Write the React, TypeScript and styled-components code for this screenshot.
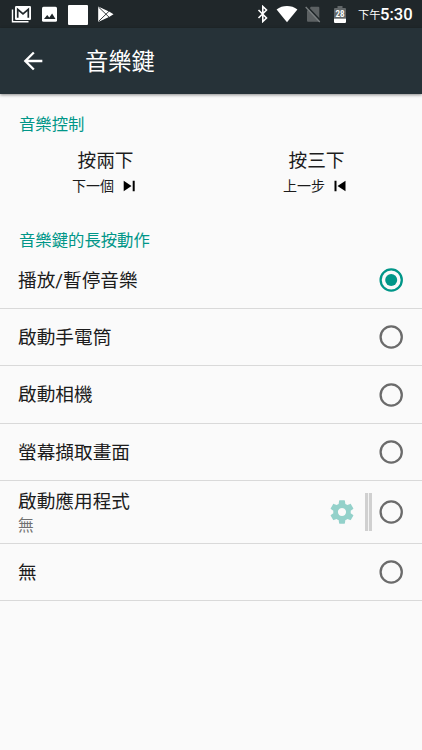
import React from "react";
import styled, { createGlobalStyle } from "styled-components";

const GlobalStyle = createGlobalStyle`
  * { box-sizing: border-box; }
  body {
    margin: 0;
    background: #fafafa;
    color: #1c1c1c;
    font-family: Roboto, "Noto Sans CJK TC", sans-serif;
  }
`;

const Screen = styled.div`
  width: 422px;
  height: 750px;
  overflow: hidden;
  background: #fafafa;
`;

const StatusBar = styled.header`
  display: flex;
  justify-content: space-between;
  height: 28px;
  padding: 0 10px 0 11px;
  background: #20272a;
  color: #fff;
`;

const StatusGroup = styled.div`
  display: flex;
  align-items: center;
`;

const Glyph = styled.svg<{ $gap?: number }>`
  display: block;
  flex: none;
  margin-right: ${(p) => p.$gap ?? 0}px;
`;

const BlankNotification = styled.span<{ $gap: number }>`
  width: 20px;
  height: 20px;
  margin: 1px ${(p) => p.$gap}px 0 0;
  border-radius: 1px;
  background: #fff;
`;

const Period = styled.span`
  width: 22px;
  font-size: 11.3px;
  line-height: 16px;
  padding-top: 4px;
  white-space: nowrap;
`;

const Time = styled.span`
  width: 32px;
  font-size: 16.6px;
  font-weight: 500;
  line-height: 28px;
  padding-top: 2px;
  white-space: nowrap;
`;

const AppBar = styled.div`
  display: flex;
  align-items: center;
  height: 66px;
  padding-left: 19px;
  background: #263238;
  color: #fff;
  box-shadow: 0 1px 3px rgba(0, 0, 0, 0.45);
`;

const BackButton = styled.button`
  display: flex;
  width: 66px;
  padding: 0;
  border: 0;
  background: none;
  color: inherit;
`;

const Title = styled.h1`
  margin: 0;
  padding-top: 2px;
  font-size: 23.3px;
  font-weight: 400;
  line-height: 34px;
`;

const SectionTitle = styled.h2<{ $top: number }>`
  margin: ${(p) => p.$top}px 0 0 19px;
  color: #009688;
  font-size: 16.35px;
  font-weight: 400;
  line-height: 24px;
`;

const Controls = styled.div`
  display: grid;
  grid-template-columns: 1fr 1fr;
  padding-top: 11px;
`;

const Control = styled.div`
  display: flex;
  flex-direction: column;
  align-items: center;
`;

const ControlTitle = styled.div`
  font-size: 18.7px;
  line-height: 27px;
`;

const ControlAction = styled.div`
  display: flex;
  align-items: center;
  gap: 6px;
  height: 22px;
  padding-right: 1px;
  font-size: 14px;
  line-height: 22px;
`;

const List = styled.div`
  display: flex;
  flex-direction: column;
  margin-top: -1px;
`;

const Row = styled.div<{ $height: number }>`
  display: flex;
  align-items: center;
  height: ${(p) => p.$height}px;
  padding: 0 17px 0 18px;
  border-bottom: 1px solid #d9d9d9;
`;

const RowText = styled.div<{ $single: boolean }>`
  flex: 1;
  padding-top: ${(p) => (p.$single ? 2 : 0)}px;
`;

const RowLabel = styled.div`
  font-size: 18.67px;
  line-height: 27px;
`;

const RowDetail = styled.div`
  color: #707070;
  font-size: 15.8px;
  line-height: 20px;
`;

const Handle = styled.span`
  width: 7px;
  height: 38px;
  margin: 0 5px 0 9px;
  background: linear-gradient(90deg, #d0d0d0 2.6px, #f4f4f4 2.6px 4.4px, #d0d0d0 4.4px);
`;

function Radio({ checked }: { checked: boolean }) {
  const color = checked ? "#009688" : "#6b6b6b";
  return (
    <Glyph width="28" height="28" viewBox="0 0 28 28" role="radio" aria-checked={checked}>
      <circle cx="14.2" cy="14" r="10.6" fill="none" stroke={color} strokeWidth="2.3" />
      {checked && <circle cx="14.2" cy="14" r="6" fill={color} />}
    </Glyph>
  );
}

function Gear() {
  return (
    <Glyph width="28" height="28" viewBox="0 0 24 24" fill="#93d1ca">
      <path d="M19.43 12.98c.04-.32.07-.64.07-.98s-.03-.66-.07-.98l2.11-1.65c.19-.15.24-.42.12-.64l-2-3.46c-.12-.22-.39-.3-.61-.22l-2.49 1c-.52-.4-1.08-.73-1.69-.98l-.38-2.65C14.46 2.18 14.25 2 14 2h-4c-.25 0-.46.18-.49.42l-.38 2.65c-.61.25-1.17.59-1.69.98l-2.49-1c-.23-.09-.49 0-.61.22l-2 3.46c-.13.22-.07.49.12.64l2.11 1.65c-.04.32-.07.65-.07.98s.03.66.07.98l-2.11 1.65c-.19.15-.24.42-.12.64l2 3.46c.12.22.39.3.61.22l2.49-1c.52.4 1.08.73 1.69.98l.38 2.65c.03.24.24.42.49.42h4c.25 0 .46-.18.49-.42l.38-2.65c.61-.25 1.17-.59 1.69-.98l2.49 1c.23.09.49 0 .61-.22l2-3.46c.12-.22.07-.49-.12-.64l-2.11-1.65zM12 15.5c-1.93 0-3.5-1.57-3.5-3.5s1.57-3.5 3.5-3.5 3.5 1.57 3.5 3.5-1.57 3.5-3.5 3.5z" />
    </Glyph>
  );
}

function Notifications() {
  return (
    <StatusGroup>
      <Glyph $gap={10} width="21" height="20" viewBox="0 0 21 20">
        <path d="M1.5 5.5v12.3H17.5" fill="none" stroke="#fff" strokeWidth="1.4" />
        <rect x="4" y="2" width="16" height="14" rx="1.2" fill="#fff" />
        <path d="M6.7 13.8V5.4L12 9.8l5.3-4.4v8.4" fill="none" stroke="#20272a" strokeWidth="1.7" />
      </Glyph>
      <Glyph $gap={11} width="15" height="16" viewBox="0 0 15 16">
        <rect y="0.8" width="15" height="15" rx="1.5" fill="#fff" />
        <path d="M2 13l3.2-4.1 2.1 2.6 2.8-4 3.4 5.5z" fill="#20272a" />
      </Glyph>
      <BlankNotification $gap={9} />
      <Glyph width="18" height="18" viewBox="0 0 18 18">
        <path d="M1.2 1.4L12.5 6.7 16.5 9.2 12.5 11.7 1.2 17z" fill="#fff" />
        <path d="M1.5 2L12.5 12.6M1.5 16.4L12.5 5.8" fill="none" stroke="#20272a" strokeWidth="0.9" />
        <path d="M3 6.2v6l3-3z" fill="#fff" />
      </Glyph>
    </StatusGroup>
  );
}

function SystemIcons() {
  return (
    <StatusGroup>
      <Glyph $gap={7} width="12" height="18" viewBox="0 0 12 18" fill="none" stroke="#fff" strokeWidth="1.6">
        <path d="M1.5 5l8 8-3.7 3.5v-15L9.5 5l-8 8" />
      </Glyph>
      <Glyph $gap={7} width="22" height="18" viewBox="0 0 22 18">
        <path d="M.6 4.5C6.5-.1 15.5-.1 21.4 4.5L11 17.2z" fill="#fff" />
      </Glyph>
      <Glyph $gap={13} width="16" height="18" viewBox="0 0 16 18">
        <path d="M6 1.7h7.3q1 0 1 1v14.1H3q-1 0-1-1V5.7z" fill="#5c6163" />
        <path d="M1.7 1L15.5 15.8" stroke="#20272a" strokeWidth="1.8" />
        <path d="M.7 2L14.8 17" stroke="#7a7f81" strokeWidth="1.3" />
      </Glyph>
      <Glyph $gap={12} width="12" height="18" viewBox="0 0 12 18">
        <path d="M3.5 1h5v2H11a1 1 0 011 1v9H0V4a1 1 0 011-1h2.5z" fill="#626769" />
        <path d="M0 13.5h12v3.6a.8.8 0 01-.8.8H.8a.8.8 0 01-.8-.8z" fill="#fff" />
        <text x="1.5" y="12.2" textLength="9" lengthAdjust="spacingAndGlyphs" fontFamily="Roboto, sans-serif" fontSize="9.5" fontWeight="700" fill="#fff">28</text>
      </Glyph>
      <Period>下午</Period>
      <Time>5:30</Time>
    </StatusGroup>
  );
}

const options = [
  { label: "播放/暫停音樂", height: 57 },
  { label: "啟動手電筒", height: 57 },
  { label: "啟動相機", height: 58 },
  { label: "螢幕擷取畫面", height: 57 },
  { label: "啟動應用程式", height: 63, detail: "無" },
  { label: "無", height: 57 },
];

export default function App() {
  return (
    <Screen>
      <GlobalStyle />
      <StatusBar>
        <Notifications />
        <SystemIcons />
      </StatusBar>
      <AppBar>
        <BackButton aria-label="返回">
          <Glyph width="28" height="28" viewBox="0 0 24 24" fill="currentColor">
            <path d="M20 11H7.83l5.59-5.59L12 4l-8 8 8 8 1.41-1.41L7.83 13H20v-2z" />
          </Glyph>
        </BackButton>
        <Title>音樂鍵</Title>
      </AppBar>
      <main>
        <SectionTitle $top={19}>音樂控制</SectionTitle>
        <Controls>
          <Control>
            <ControlTitle>按兩下</ControlTitle>
            <ControlAction>
              下一個
              <Glyph width="18" height="18" viewBox="0 0 18 18">
                <path d="M3.7 3.8L11.5 9l-7.8 5.2zM12.7 3.8h2v10.4h-2z" />
              </Glyph>
            </ControlAction>
          </Control>
          <Control>
            <ControlTitle>按三下</ControlTitle>
            <ControlAction>
              上一步
              <Glyph width="18" height="18" viewBox="0 0 18 18">
                <path d="M3.5 3.8h2v10.4h-2zM14.5 3.8v10.4L6.5 9z" />
              </Glyph>
            </ControlAction>
          </Control>
        </Controls>
        <SectionTitle $top={32}>音樂鍵的長按動作</SectionTitle>
        <List role="radiogroup">
          {options.map((option, index) => (
            <Row key={option.label} $height={option.height}>
              <RowText $single={!option.detail}>
                <RowLabel>{option.label}</RowLabel>
                {option.detail && <RowDetail>{option.detail}</RowDetail>}
              </RowText>
              {option.detail && (
                <>
                  <Gear />
                  <Handle />
                </>
              )}
              <Radio checked={index === 0} />
            </Row>
          ))}
        </List>
      </main>
    </Screen>
  );
}
